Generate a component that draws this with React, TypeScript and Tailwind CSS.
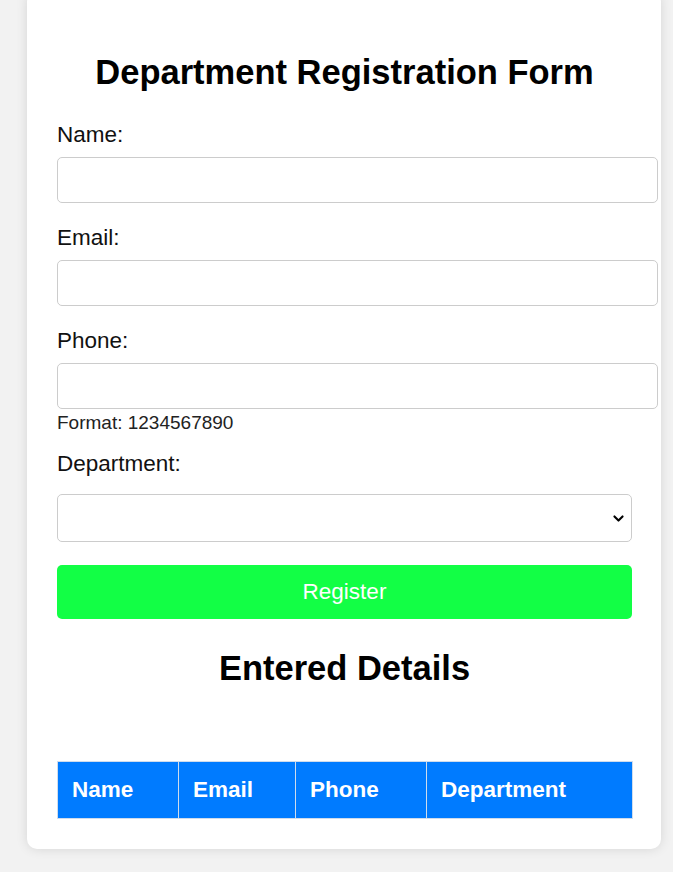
import React from "react";

const font = { fontFamily: '"Liberation Sans", Arial, sans-serif' };

function Field({ label, first }: { label: string; first?: boolean }) {
  return (
    <div className={first ? "mt-[30px]" : "mt-[22px]"}>
      <label className="block text-[22.5px] leading-[26px] text-[#111]">{label}</label>
      <input
        type="text"
        className="mt-[9px] block h-[46px] w-[601px] rounded-[5px] border border-[#cccccc] bg-white px-3 outline-none"
      />
    </div>
  );
}

export default function App() {
  return (
    <div className="min-h-[872px] w-full overflow-hidden bg-[#f2f2f2]" style={font}>
      <div className="ml-[27px] mt-[-8px] w-[634px] rounded-[10px] bg-white pb-[30px] pl-[30px] pr-[29px] pt-[60px] shadow-[0_0_12px_rgba(0,0,0,0.12)]">
        <h2 className="text-center text-[34.5px] font-bold leading-[40px] text-black">
          Department Registration Form
        </h2>

        <Field label="Name:" first />
        <Field label="Email:" />
        <Field label="Phone:" />
        <div className="mt-[3px] text-[19px] leading-[22px] text-[#222]">Format: 1234567890</div>

        <div className="mt-[17px]">
          <label className="block text-[22.5px] leading-[26px] text-[#111]">Department:</label>
          <div className="relative mt-[17px] h-[48px] w-[575px] rounded-[5px] border border-[#cccccc] bg-white">
            <svg
              className="absolute right-[6px] top-[17px]"
              width="13"
              height="13"
              viewBox="0 0 16 16"
              fill="none"
              stroke="black"
              strokeWidth="2.6"
              strokeLinecap="round"
              strokeLinejoin="round"
            >
              <path d="M3 5.5l5 5 5-5" />
            </svg>
          </div>
        </div>

        <button className="mt-[23px] block h-[54px] w-[575px] rounded-[5px] bg-[#12ff45] text-[22.5px] leading-[26px] text-white">
          Register
        </button>

        <h2 className="mt-[29px] text-center text-[34.5px] font-bold leading-[40px] text-black">
          Entered Details
        </h2>

        <table className="mt-[73px] w-[575px] table-fixed border-collapse">
          <colgroup>
            <col className="w-[121px]" />
            <col className="w-[117px]" />
            <col className="w-[131px]" />
            <col className="w-[206px]" />
          </colgroup>
          <thead>
            <tr className="bg-[#007bff]">
              {["Name", "Email", "Phone", "Department"].map((h) => (
                <th
                  key={h}
                  className="border border-[#cfdcec] px-[14px] py-[15px] text-left text-[22.5px] font-bold leading-[26px] text-white"
                >
                  {h}
                </th>
              ))}
            </tr>
          </thead>
        </table>
      </div>
    </div>
  );
}
